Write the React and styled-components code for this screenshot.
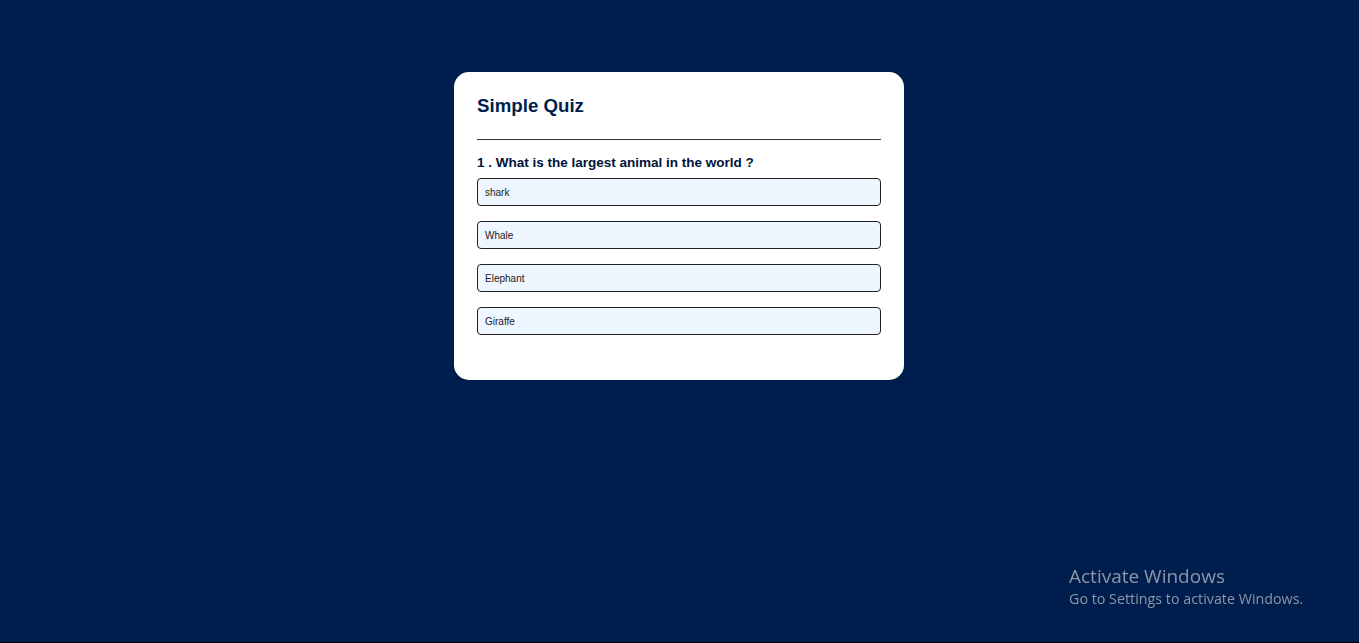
import React from "react";
import styled, { createGlobalStyle } from "styled-components";

const Global = createGlobalStyle`
  * { box-sizing: border-box; }
  html, body { margin: 0; padding: 0; }
  body { background: #001e4d; font-family: "Liberation Sans", Arial, sans-serif; }
`;

const Page = styled.div`
  min-height: 100vh;
  background: #001e4d;
  border-bottom: 1px solid #000;
  padding: 72px 1px 0 0;
  position: relative;
`;

const Card = styled.div`
  width: 450px;
  margin: 0 auto;
  background: #fff;
  border-radius: 15px;
  padding: 23px 23px 45px;
`;

const Title = styled.h1`
  margin: 0;
  font-size: 18.7px;
  line-height: 22px;
  font-weight: 700;
  color: #001e4d;
  padding-bottom: 22px;
  border-bottom: 1px solid #333;
`;

const Question = styled.h2`
  margin: 15px 0 8px;
  font-size: 13.5px;
  line-height: 15px;
  font-weight: 700;
  color: #00143a;
`;

const Answers = styled.div`
  display: flex;
  flex-direction: column;
  gap: 15px;
`;

const Answer = styled.button`
  display: block;
  width: 100%;
  height: 28px;
  background: #eef6ff;
  border: 1px solid #222;
  border-radius: 4px;
  padding: 0 7px;
  text-align: left;
  font-family: "Liberation Sans", Arial, sans-serif;
  font-size: 10px;
  color: #222;
  cursor: pointer;
`;

const Watermark = styled.div`
  position: fixed;
  left: 1069px;
  top: 563px;
  font-family: "Open Sans", "Noto Sans", sans-serif;
  color: #8c95a8;
`;

const WmTitle = styled.div`
  font-size: 19px;
  line-height: 26px;
`;

const WmSub = styled.div`
  font-size: 14.3px;
  line-height: 20px;
`;

const answers = ["shark", "Whale", "Elephant", "Giraffe"];

export default function App() {
  return (
    <Page>
      <Global />
      <Card>
        <Title>Simple Quiz</Title>
        <Question>1 . What is the largest animal in the world ?</Question>
        <Answers>
          {answers.map((a) => (
            <Answer key={a}>{a}</Answer>
          ))}
        </Answers>
      </Card>
      <Watermark>
        <WmTitle>Activate Windows</WmTitle>
        <WmSub>Go to Settings to activate Windows.</WmSub>
      </Watermark>
    </Page>
  );
}
